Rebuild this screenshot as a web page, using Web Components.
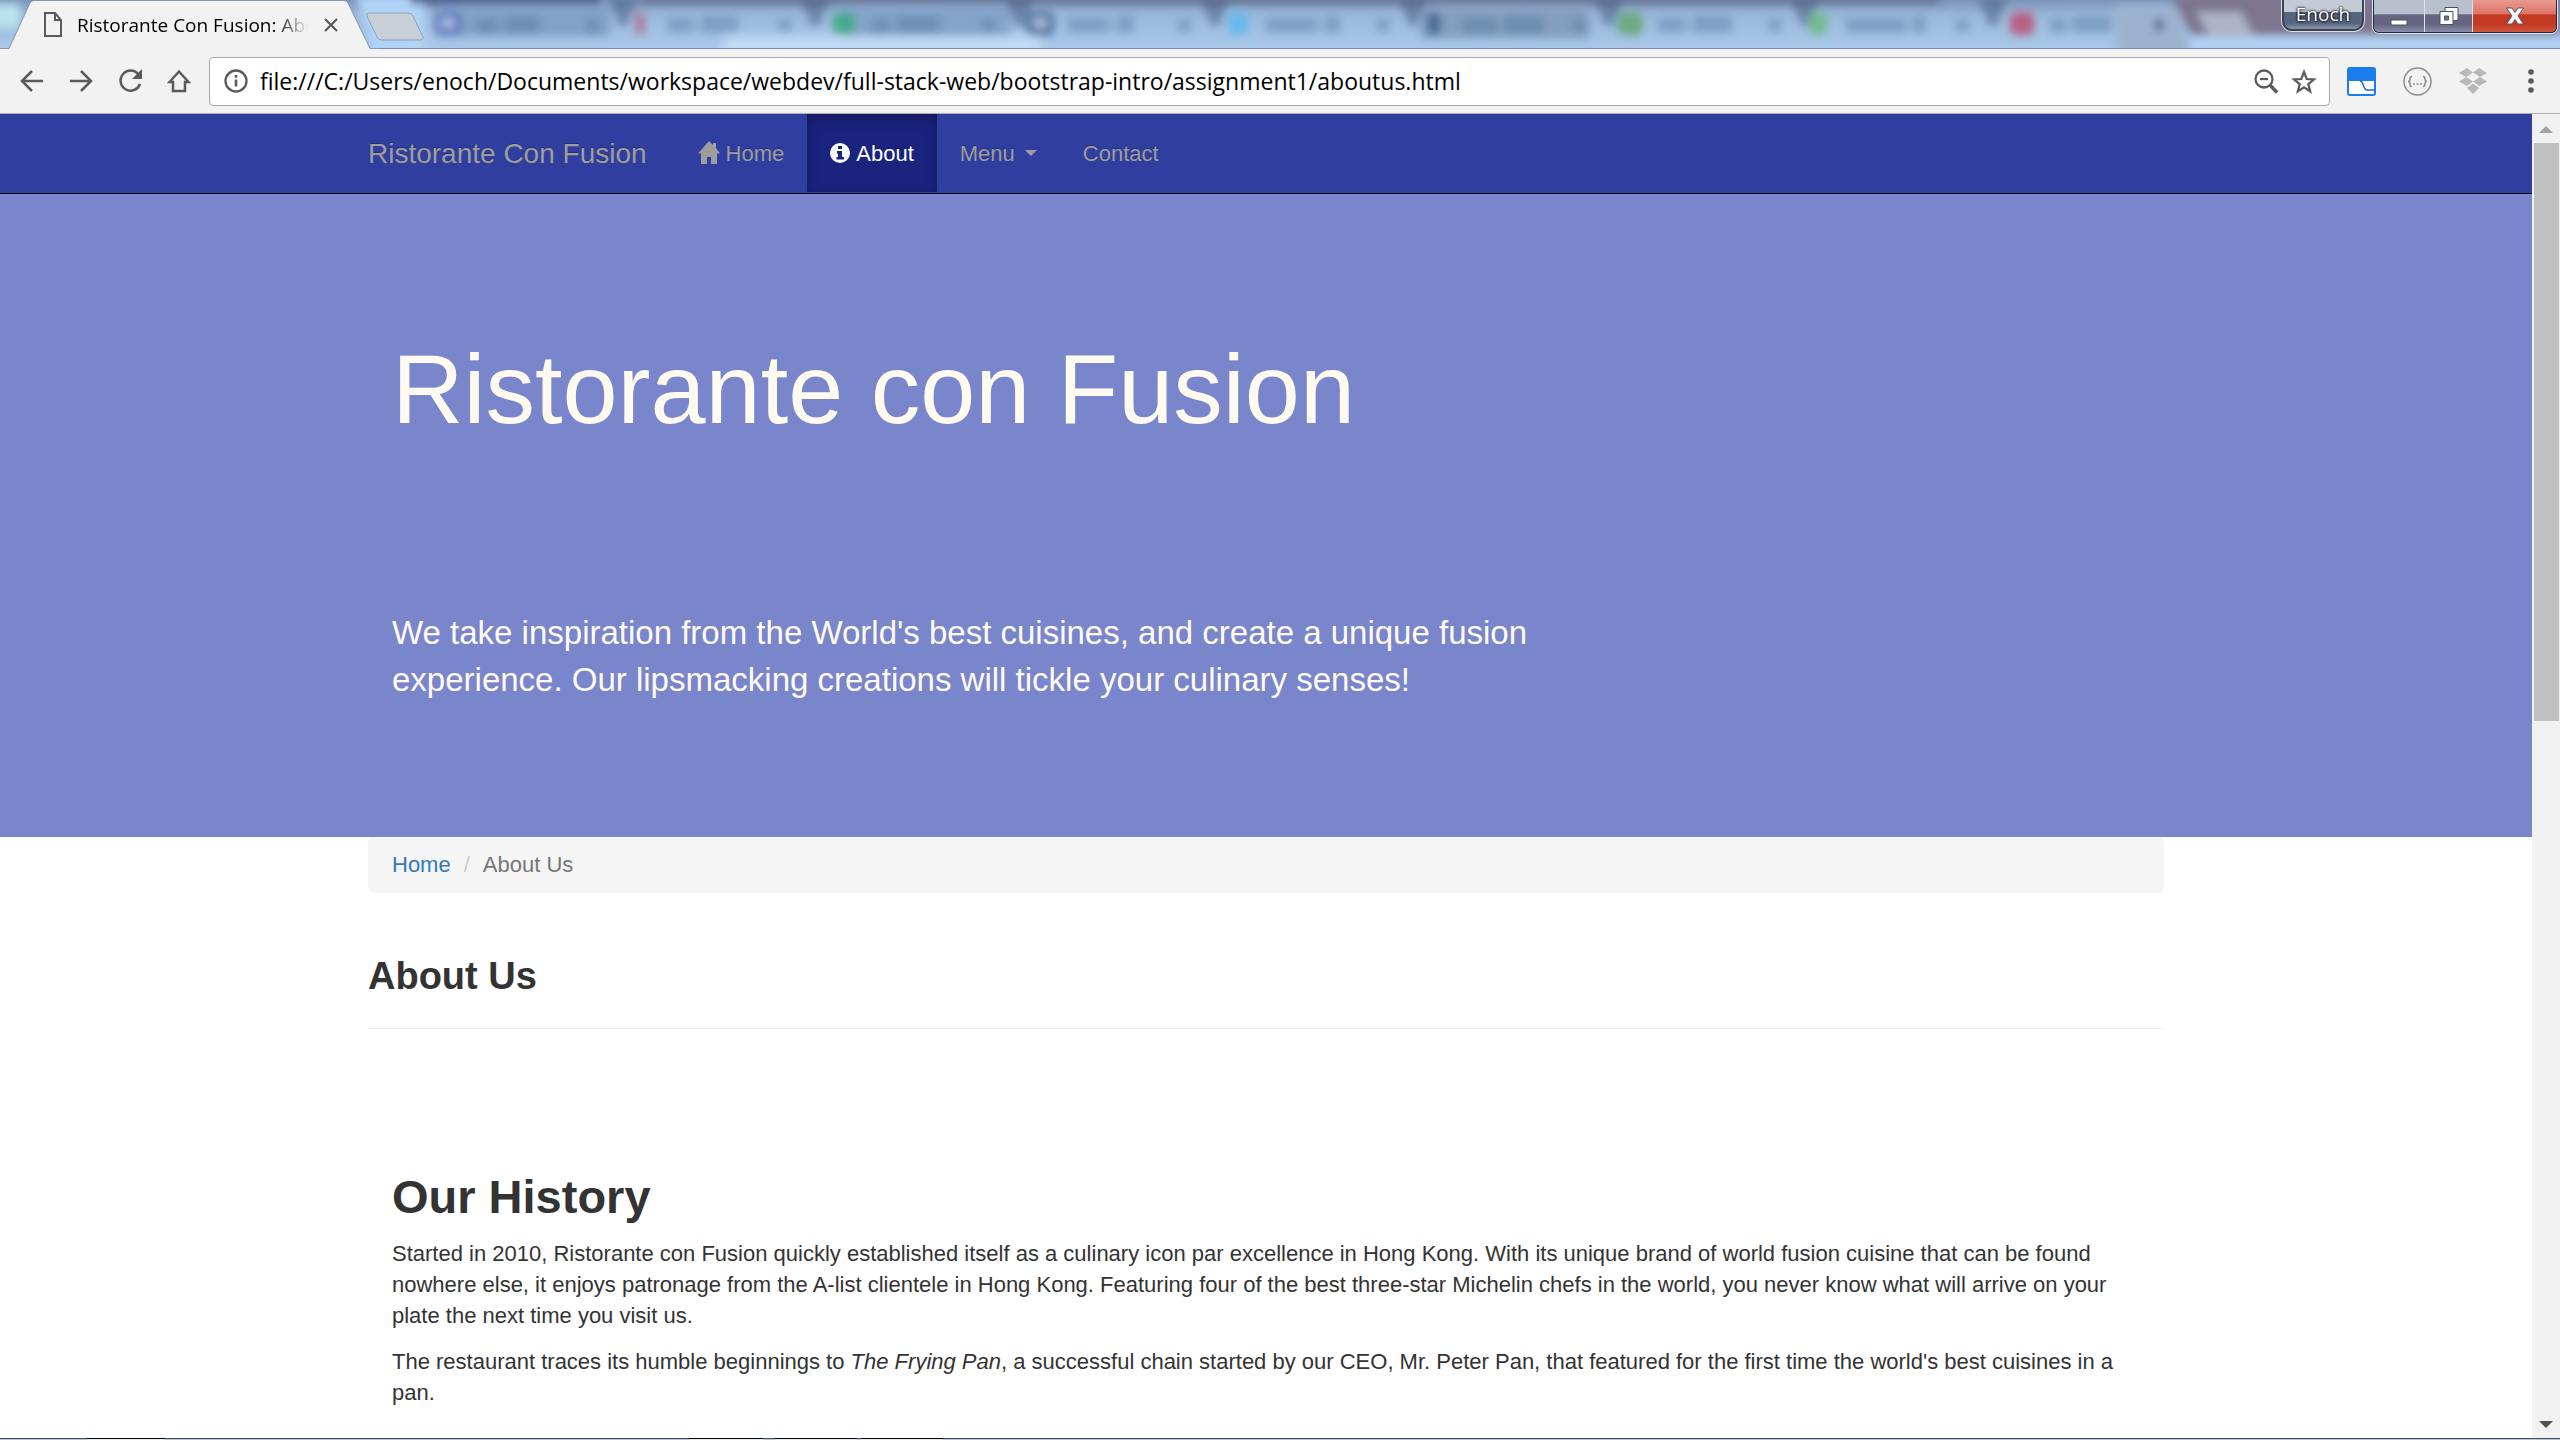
<!DOCTYPE html>
<html lang="en">
<head>
<meta charset="utf-8">
<title>Ristorante Con Fusion: About Us</title>
<style>
  html, body { height: 100%; }
  body { margin: 0; display: flex; flex-direction: column; overflow: hidden; background: #fff; color: #333;
    font: 22px/31px "Liberation Sans", Arial, sans-serif; }
  .view { flex: 1; min-height: 0; display: flex; }
  main { flex: 1; min-width: 0; overflow: hidden; }
</style>
</head>
<body>
<window-tabs user="Enoch">Ristorante Con Fusion: About Us</window-tabs>
<browser-toolbar url="file:///C:/Users/enoch/Documents/workspace/webdev/full-stack-web/bootstrap-intro/assignment1/aboutus.html"></browser-toolbar>
<div class="view">
  <main>
    <site-nav></site-nav>
    <hero-banner>
      <span slot="title">Ristorante con Fusion</span>
      We take inspiration from the World's best cuisines, and create a unique fusion experience. Our lipsmacking creations will tickle your culinary senses!
    </hero-banner>
    <page-container>
      <bread-crumb current="About Us"></bread-crumb>
      <page-heading>About Us</page-heading>
      <text-section heading="Our History">
        <p>Started in 2010, Ristorante con Fusion quickly established itself as a culinary icon par excellence in Hong Kong. With its unique brand of world fusion cuisine that can be found nowhere else, it enjoys patronage from the A-list clientele in Hong Kong. Featuring four of the best three-star Michelin chefs in the world, you never know what will arrive on your plate the next time you visit us.</p>
        <p>The restaurant traces its humble beginnings to <em>The Frying Pan</em>, a successful chain started by our CEO, Mr. Peter Pan, that featured for the first time the world's best cuisines in a pan.</p>
      </text-section>
    </page-container>
  </main>
  <scroll-rail></scroll-rail>
</div>
<task-edge></task-edge>

<script>
const reset = `*,:host{box-sizing:border-box} button{border:0;background:none;padding:0;margin:0;font:inherit;color:inherit;display:block} svg{display:block}`;
const define = (name, html) => customElements.define(name, class extends HTMLElement {
  constructor() {
    super();
    const t = document.createElement('template');
    t.innerHTML = `<style>${reset}</style>` + (typeof html === 'function' ? html(this) : html);
    this.attachShadow({ mode: 'open' }).append(t.content.cloneNode(true));
  }
});

// Soft shapes of the window behind the glass title bar: [favicon x, colour, favicon width, label widths]
const ghosts = [[448,'#5566b8',27,[22,36]],[640,'#b4637e',8,[26,38]],[844,'#37ab83',23,[18,44]],[1040,'#2c527f',27,[42,18]],[1238,'#62b8ee',21,[52,16]],[1434,'#3d638c',14,[36,40]],[1630,'#69a573',26,[28,40]],[1818,'#6fbb83',18,[60,14]],[2022,'#bb5271',24,[16,40]]];
const ghostMarks = ghosts.map(([x, c, w, [a, b]], i) => `
  <rect x="${x - w / 2}" y="12" width="${w}" height="23" rx="6" fill="${c}" opacity=".85"/>
  ${i === 0 || i === 3 ? `<rect x="${x - 7}" y="18" width="14" height="10" fill="#a9c2e4"/>` : ''}
  <g fill="#4d7097" opacity=".38"><rect x="${x + 28}" y="18" width="${a}" height="15"/><rect x="${x + 34 + a}" y="16" width="${b}" height="17"/>
  <rect x="${x + 138}" y="19" width="13" height="13"/></g>
  ${i < 8 ? `<path d="M${x + 160} -2h30l-12 28h-6z" fill="#4d6289" opacity=".6"/>` : ''}`).join('');

define('window-tabs', el => `
<style>
  :host{display:flex;position:relative;height:49px;flex:none;justify-content:space-between;overflow:hidden;background:#a3c1e2;
    font:19px/28px "Open Sans","Noto Sans",sans-serif;color:#000}
  .glass{position:absolute;inset:0;width:100%;height:100%}
  .strip,.controls{position:relative;display:flex;align-items:flex-start}
  .tab{position:relative;display:flex;align-items:center;width:380px;height:49px;padding:0 42px 0 44px}
  .shape{position:absolute;inset:0}
  .tab>*:not(.shape){position:relative}
  .name{flex:1;margin:0 16px 0 15px;overflow:hidden;white-space:nowrap;-webkit-mask:linear-gradient(90deg,#000 86%,transparent);mask:linear-gradient(90deg,#000 86%,transparent)}
  .new{margin:12px 0 0 -14px}
  .user{height:31px;width:82px;margin-right:9px;border:2px solid #3b4452;border-top:0;border-radius:0 0 10px 10px;
    box-shadow:0 0 0 1px #d9dee6;background:linear-gradient(#c4cad6 0 42%,#55647f 43% 80%,#8b97ab);color:#fff;font-size:19px;line-height:27px;text-shadow:0 0 3px #000,0 0 2px #000}
  .win{display:flex;margin-right:3px;height:33px;border:1px solid #222b3d;border-top:0;border-radius:0 0 6px 6px;box-shadow:0 0 0 1px #dfe4ec;overflow:hidden}
  .win button{height:32px;display:grid;place-items:center;background:linear-gradient(#b8bfcd 0 44%,#666480 46% 75%,#8b8ea8);border-right:1px solid #dde2ea}
  .min{width:51px}.max{width:48px}
  .win .close{width:83px;border:0;background:linear-gradient(#e79a8f,#dd7467 44%,#c23a24 46% 75%,#d0553f)}
</style>
<svg class="glass" viewBox="0 0 2560 49" preserveAspectRatio="none" aria-hidden="true">
  <defs><filter id="b" x="-5%" y="-50%" width="110%" height="200%"><feGaussianBlur stdDeviation="4"/></filter>
  <linearGradient id="g" x2="0" y2="1"><stop stop-color="#7c93b8"/><stop offset=".3" stop-color="#9ab7da"/><stop offset="1" stop-color="#a9c9ea"/></linearGradient></defs>
  <rect width="2560" height="49" fill="url(#g)"/>
  <g filter="url(#b)">
    <rect x="-10" y="4" width="30" height="24" fill="#b9e2ec"/>
    <path d="M355 -5h70v60h-50z" fill="#b0d3f6"/>
    <rect x="410" y="-6" width="190" height="10" fill="#4a5d8b"/>
    <rect x="440" y="6" width="170" height="30" fill="#83a2c8"/><rect x="840" y="6" width="170" height="30" fill="#86a3cc"/>
    <rect x="1420" y="8" width="170" height="30" fill="#849fc0"/>
    <rect x="640" y="-6" width="1300" height="9" fill="#667391"/>
    ${ghostMarks}
    <path d="M726 36h312l6 20H718z" fill="#c0d9f4"/>
    <path d="M2170 -5h390v40H2192z" fill="#7d7590"/>
    <path d="M2115 5h60l20 50h-80z" fill="#9cb3d0"/>
    <rect x="2154" y="19" width="10" height="12" fill="#5d718e"/>
    <path d="M2196 12h45l14 26h-44z" fill="#adb3c8"/>
    <rect x="2190" y="37" width="380" height="14" fill="#b2d1f3"/>
  </g>
  <rect y="48" width="2560" height="1" fill="#7391b5"/>
</svg>
<div class="strip">
  <div class="tab">
    <svg class="shape" width="380" height="49" viewBox="0 0 380 49" aria-hidden="true"><path d="M0 48.500H9L30 3Q31.500 .5 34 .5H344Q347 .5 348 3L370 48.500H380V50H0Z" fill="#f2f2f2" stroke="#8296ad"/></svg>
    <svg width="18" height="25" viewBox="0 0 18 25" fill="none" stroke="#5a5a5a" stroke-width="2"><path d="M1 1h10l6 7v16H1zM11 1v7h6"/></svg>
    <span class="name"><slot></slot></span>
    <button aria-label="Close tab"><svg width="14" height="14" viewBox="0 0 14 14" stroke="#555" stroke-width="2"><path d="M1 1l12 12M13 1L1 13"/></svg></button>
  </div>
  <button class="new" aria-label="New tab"><svg width="59" height="29" viewBox="0 0 59 29"><path d="M3 1H42Q46 1 47 4L57 25Q58 28 54 28H16Q12 28 11 25L1 4Q0 1 3 1Z" fill="#c8cfd7" stroke="#8fa3ba"/></svg></button>
</div>
<div class="controls">
  <button class="user">${el.getAttribute('user')}</button>
  <div class="win">
    <button class="min" aria-label="Minimize"><svg width="18" height="22" viewBox="0 0 18 22"><rect x="1" y="15" width="16" height="5" fill="#fff" stroke="#4c5260"/></svg></button>
    <button class="max" aria-label="Restore"><svg width="22" height="20" viewBox="0 0 22 20"><g fill="#fff" stroke="#4c5260"><path d="M7 1.500h13v13H7z"/><path d="M2 5.500h13v13H2z"/><path d="M6.500 10h4v4h-4z" fill="#687792"/></g></svg></button>
    <button class="close" aria-label="Close"><svg width="20" height="18" viewBox="0 0 20 18"><path d="M1.500 1h5.500l3 4.500 3-4.500h5.500l-5.500 8 5.500 8h-5.500l-3-4.500-3 4.500h-5.500l5.500-8z" fill="#fff" stroke="#5b5560"/></svg></button>
  </div>
</div>`);

define('browser-toolbar', el => `
<style>
  :host{display:flex;flex:none;align-items:center;height:65px;padding:0 18px 0 20px;background:#f2f2f2;border-bottom:1px solid #adadad}
  .nav{display:flex;gap:25px;margin-right:18px}
  .box{flex:1;display:flex;align-items:center;height:49px;padding:0 12px 0 14px;background:#fff;border:1px solid #a9a9a9;border-radius:4px}
  input{flex:1;min-width:0;border:0;outline:0;padding:0;margin:0 12px;background:none;color:#000;font:23px/36px "Open Sans","Noto Sans",sans-serif}
  .marks{display:flex;gap:13px}
  .ext{display:flex;align-items:center;gap:27px;margin-left:17px}
</style>
<div class="nav">
  <button aria-label="Back"><svg width="24" height="24" viewBox="0 0 24 24" fill="none" stroke="#5a5a5a" stroke-width="2.500"><path d="M23 12H2M12 2L2 12l10 10"/></svg></button>
  <button aria-label="Forward"><svg width="24" height="24" viewBox="0 0 24 24" fill="none" stroke="#5a5a5a" stroke-width="2.500"><path d="M1 12h21M12 2l10 10-10 10"/></svg></button>
  <button aria-label="Reload"><svg width="24" height="24" viewBox="0 0 24 24" fill="none" stroke="#5a5a5a" stroke-width="2.500"><path d="M20.500 5.500A10 10 0 1 0 22 15"/><path d="M24 0v10H14z" fill="#5a5a5a" stroke="none"/></svg></button>
  <button aria-label="Home"><svg width="24" height="24" viewBox="0 0 24 24" fill="none" stroke="#5a5a5a" stroke-width="2.500"><path d="M12 2.500L2.500 13H6v9h12v-9h3.500z"/></svg></button>
</div>
<div class="box">
  <svg width="24" height="24" viewBox="0 0 24 24" aria-hidden="true"><circle cx="12" cy="12" r="10.500" fill="none" stroke="#5a5a5a" stroke-width="2.300"/><path d="M10.700 10.500h2.600v7h-2.600zM10.700 6h2.600v2.700h-2.600z" fill="#5a5a5a"/></svg>
  <input aria-label="Address" spellcheck="false" value="${el.getAttribute('url')}">
  <div class="marks">
    <button aria-label="Zoom"><svg width="24" height="25" viewBox="0 0 24 25" fill="none" stroke="#5a5a5a" stroke-width="2.300"><circle cx="10" cy="10" r="8.500"/><path d="M6 10h8"/><path d="M16 16l7 7.500" stroke-width="3.400"/></svg></button>
    <button aria-label="Bookmark"><svg width="26" height="25" viewBox="0 0 26 25" fill="none" stroke="#5a5a5a" stroke-width="2.200"><path d="M13 3l2.700 7 7.300.4-5.700 4.700 1.900 7.300-6.200-4-6.200 4 1.900-7.300L3 10.400l7.300-.4z"/></svg></button>
  </div>
</div>
<div class="ext">
  <button aria-label="Extension"><svg width="29" height="29" viewBox="0 0 29 29"><rect x="1" y="1" width="27" height="27" rx="2" fill="#fff" stroke="#1a7cf0" stroke-width="2"/><path d="M1 2h27v12H1z" fill="#1b7cee"/><path d="M13 14c4 0 3 9 7 9h8" fill="none" stroke="#1a66d8" stroke-width="1.500"/></svg></button>
  <button aria-label="JSON viewer"><svg width="29" height="29" viewBox="0 0 29 29" fill="none" stroke="#8c8c8c" stroke-width="1.500"><circle cx="14.500" cy="14.500" r="13.500"/><path d="M9 9.500q-2 0-2 2.500t-2 2.500q2 0 2 2.500t2 2.500M20 9.500q2 0 2 2.500t2 2.500q-2 0-2 2.500t-2 2.500"/><path d="M10 17h9" stroke-dasharray="2 1.500"/></svg></button>
  <button aria-label="Dropbox"><svg width="28" height="27" viewBox="0 0 28 27" fill="#b8b8b8"><path d="M8 0l6 4.500-7 4.500L0 5zM20 0l-6 4.500L21 9l7-4zM7 9l7 4.500L8 18l-8-4.500zM21 9l-7 4.500 6 4.500 8-4.500zM14 15.500l6 4.500-6 6-6-6z"/></svg></button>
  <button aria-label="Menu"><svg width="28" height="26" viewBox="0 0 28 26" fill="#5a5a5a"><circle cx="17" cy="4" r="2.800"/><circle cx="17" cy="13" r="2.800"/><circle cx="17" cy="22" r="2.800"/></svg></button>
</div>`);

define('site-nav', `
<style>
  :host{display:block;background:#303f9f;border-bottom:1px solid #080808}
  nav{display:flex;max-width:1796px;height:79px;margin:0 auto}
  a{color:#9d9d9d;text-decoration:none;text-shadow:0 -1px 0 rgba(0,0,0,.25)}
  .brand{padding:24px 28px 24px 0;font-size:28px}
  ul{display:flex;margin:0;padding:0;list-style:none}
  li a{display:flex;align-items:center;gap:6px;height:78px;padding:0 23px}
  .on{color:#fff;background:#1a237e;box-shadow:inset 0 4px 14px rgba(0,0,0,.25)}
  .caret{margin-left:4px;border:6px solid transparent;border-top-color:#9d9d9d;border-bottom:0}
</style>
<nav>
  <a class="brand" href="#">Ristorante Con Fusion</a>
  <ul>
    <li><a href="#"><svg width="22" height="24" viewBox="0 0 22 24" fill="#9d9d9d" aria-hidden="true"><path d="M11 0l4 4V2h3v5l4 5.500h-3V23h-6v-7H9v7H3V12.500H0z"/></svg>Home</a></li>
    <li><a class="on" href="#"><svg width="20" height="20" viewBox="0 0 20 20" aria-hidden="true"><circle cx="10" cy="10" r="10" fill="#fff"/><path d="M8 3h4v3H8zM7 8h5v6h2v2.500H6.500V14H8v-3.500H7z" fill="#1a237e"/></svg>About</a></li>
    <li><a href="#">Menu<span class="caret"></span></a></li>
    <li><a href="#">Contact</a></li>
  </ul>
</nav>`);

define('hero-banner', `
<style>
  :host{display:block;background:#7986cb;color:#fffaf0;padding:140px 0 134px}
  header{max-width:1796px;margin:0 auto}
  div{width:66.66%;padding:0 24px}
  h1{margin:0 0 165px;font-size:99px;line-height:110px;font-weight:400;white-space:nowrap}
  p{margin:0;font-size:33px;line-height:47px}
</style>
<header><div><h1><slot name="title"></slot></h1><p><slot></slot></p></div></header>`);

define('page-container', `<style>:host{display:block;max-width:1796px;margin:0 auto}</style><slot></slot>`);

define('bread-crumb', el => `
<style>
  :host{display:block;background:#f5f5f5;border-radius:6px}
  ol{display:flex;margin:0;padding:12px 24px 13px;list-style:none;color:#777}
  a{color:#337ab7;text-decoration:none}
  li+li::before{content:"/";color:#ccc;padding:0 13px}
</style>
<ol><li><a href="#">Home</a></li><li>${el.getAttribute('current')}</li></ol>`);

define('page-heading', `
<style>:host{display:block;padding:62px 0 31px;border-bottom:1px solid #eee}h3{margin:0;font-size:38px;line-height:42px}</style>
<h3><slot></slot></h3>`);

define('text-section', el => `
<style>
  :host{display:block;padding:142px 24px 0}
  h2{margin:0 0 15px;font-size:47px;line-height:52px}
  ::slotted(p){margin:0 0 15px}
</style>
<h2>${el.getAttribute('heading')}</h2><slot></slot>`);

define('scroll-rail', `
<style>
  :host{display:flex;flex-direction:column;align-items:center;width:28px;background:#f1f1f1;padding:12px 0 10px}
  .up,.down{border:7px solid transparent}
  .up{border-top:0;border-bottom-color:#a3a3a3}
  .down{border-bottom:0;border-top-color:#505050}
  .track{flex:1;width:25px;margin:10px 0}
  .thumb{height:45.6%;background:#c1c1c1}
</style>
<div class="up"></div><div class="track"><div class="thumb"></div></div><div class="down"></div>`);

define('task-edge', `
<style>
  :host{display:flex;flex:none;height:2px;background:linear-gradient(#3d4e63 50%,#b4c7db 50%);padding-left:87px}
  i{height:2px;background:linear-gradient(#05070c 50%,#e6ebf2 50%);width:82px;margin-right:4px}
  .first{width:78px;margin-right:524px}.second{width:74px;margin-right:12px}
</style>
<i class="first"></i><i class="second"></i><i></i><i></i>`);
</script>
</body>
</html>
